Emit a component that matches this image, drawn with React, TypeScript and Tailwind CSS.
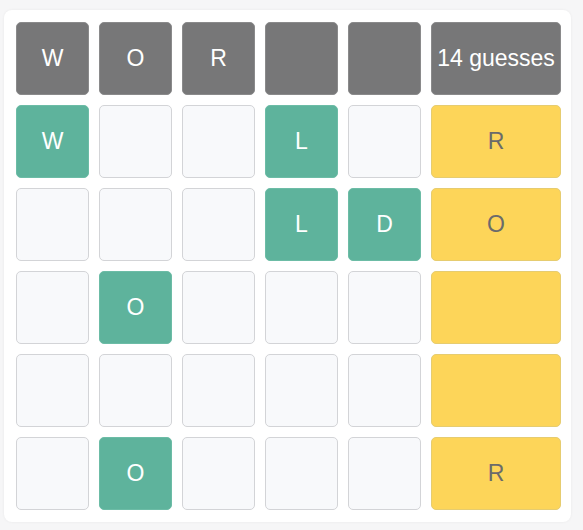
import React from "react";

type Kind = "head" | "green" | "empty" | "yellow";

const rows: { kind: Kind; text: string }[][] = [
  [
    { kind: "head", text: "W" },
    { kind: "head", text: "O" },
    { kind: "head", text: "R" },
    { kind: "head", text: "" },
    { kind: "head", text: "" },
    { kind: "head", text: "14 guesses" },
  ],
  [
    { kind: "green", text: "W" },
    { kind: "empty", text: "" },
    { kind: "empty", text: "" },
    { kind: "green", text: "L" },
    { kind: "empty", text: "" },
    { kind: "yellow", text: "R" },
  ],
  [
    { kind: "empty", text: "" },
    { kind: "empty", text: "" },
    { kind: "empty", text: "" },
    { kind: "green", text: "L" },
    { kind: "green", text: "D" },
    { kind: "yellow", text: "O" },
  ],
  [
    { kind: "empty", text: "" },
    { kind: "green", text: "O" },
    { kind: "empty", text: "" },
    { kind: "empty", text: "" },
    { kind: "empty", text: "" },
    { kind: "yellow", text: "" },
  ],
  [
    { kind: "empty", text: "" },
    { kind: "empty", text: "" },
    { kind: "empty", text: "" },
    { kind: "empty", text: "" },
    { kind: "empty", text: "" },
    { kind: "yellow", text: "" },
  ],
  [
    { kind: "empty", text: "" },
    { kind: "green", text: "O" },
    { kind: "empty", text: "" },
    { kind: "empty", text: "" },
    { kind: "empty", text: "" },
    { kind: "yellow", text: "R" },
  ],
];

const kindClass: Record<Kind, string> = {
  head: "bg-[#777778] border-[#8a8a8b] text-white",
  green: "bg-[#5eb39c] border-[#6cbca6] text-white",
  empty: "bg-[#f8f9fb] border-[#d3d4d7]",
  yellow: "bg-[#fdd559] border-[#e6cc70] text-[#6b6b6b]",
};

export default function App() {
  return (
    <div
      className="w-[583px] h-[530px] bg-[#f6f6f7] pt-[10px] pl-[4px]"
      style={{ fontFamily: '"Liberation Sans", Arial, sans-serif' }}
    >
      <div className="w-[567px] bg-white rounded-[8px] shadow-[0_0_3px_rgba(0,0,0,0.06)] pl-[12px] pr-[10px] py-[12px]">
        <div className="grid grid-cols-[73px_73px_73px_73px_73px_130px] auto-rows-[73px] gap-[10px]">
          {rows.flat().map((c, i) => (
            <div
              key={i}
              className={
                "flex items-center justify-center rounded-[5px] border text-[23px] leading-none " +
                kindClass[c.kind]
              }
            >
              {c.text}
            </div>
          ))}
        </div>
      </div>
    </div>
  );
}
